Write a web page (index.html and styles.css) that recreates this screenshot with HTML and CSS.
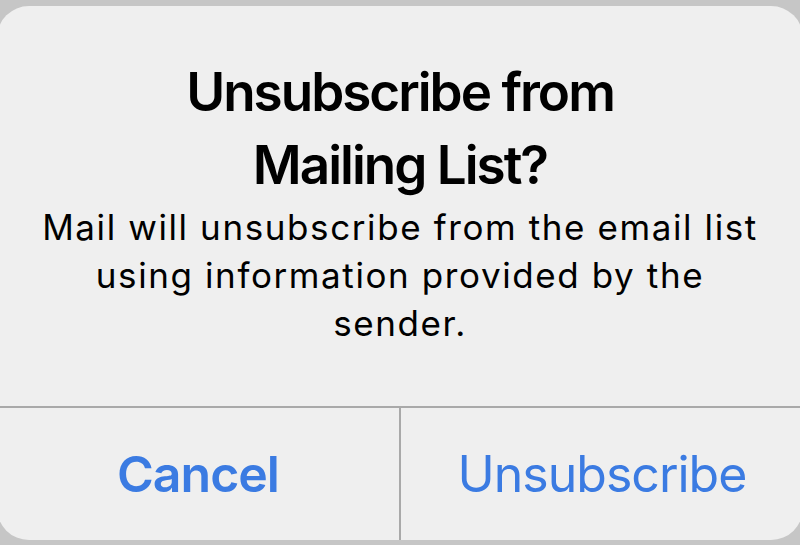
FILE: index.html
```html
<!DOCTYPE html>
<html lang="en">
<head>
    <meta charset="UTF-8">
    <meta name="viewport" content="width=device-width, initial-scale=1.0">
    <title>Unsubscribe from Mailing List?</title>
    <link rel="stylesheet" href="styles.css">
</head>
<body>
    <div class="alert">
        <div class="alert-content">
            <h1 class="alert-title">Unsubscribe from<br>Mailing List?</h1>
            <p class="alert-message">Mail will unsubscribe from the email list using information provided by the sender.</p>
        </div>
        <div class="alert-actions">
            <button type="button" class="btn btn-cancel">Cancel</button>
            <button type="button" class="btn">Unsubscribe</button>
        </div>
    </div>
</body>
</html>
```

FILE: styles.css
```css
body {
    background-color: #c6c6c6;
    font-family: 'Inter', 'Noto Sans', sans-serif;
    margin: 0;
    padding: 6px 0 0;
    overflow: hidden;
}
.alert {
    display: flex;
    flex-direction: column;
    height: 534px;
    margin: 0 -3px;
    background-color: #efefef;
    border-radius: 32px;
}
.alert-content {
    flex: 1;
    padding: 50px 36px 0;
    text-align: center;
    color: #000;
}
.alert-title {
    font-size: 53px;
    line-height: 73px;
    font-weight: 600;
    letter-spacing: -2px;
    margin: 0;
}
.alert-message {
    font-size: 35px;
    line-height: 48px;
    letter-spacing: 1.6px;
    margin: 1px 0 0;
}
.alert-actions {
    display: flex;
    height: 132px;
    border-top: 2px solid #a9a9a9;
}
.btn {
    flex: 1;
    background: none;
    border: none;
    padding: 0;
    font-family: inherit;
    font-size: 50px;
    letter-spacing: -1px;
    color: #3b7be2;
    cursor: pointer;
}
.btn + .btn {
    border-left: 2px solid #a9a9a9;
}
.btn-cancel {
    font-weight: 600;
}
```
